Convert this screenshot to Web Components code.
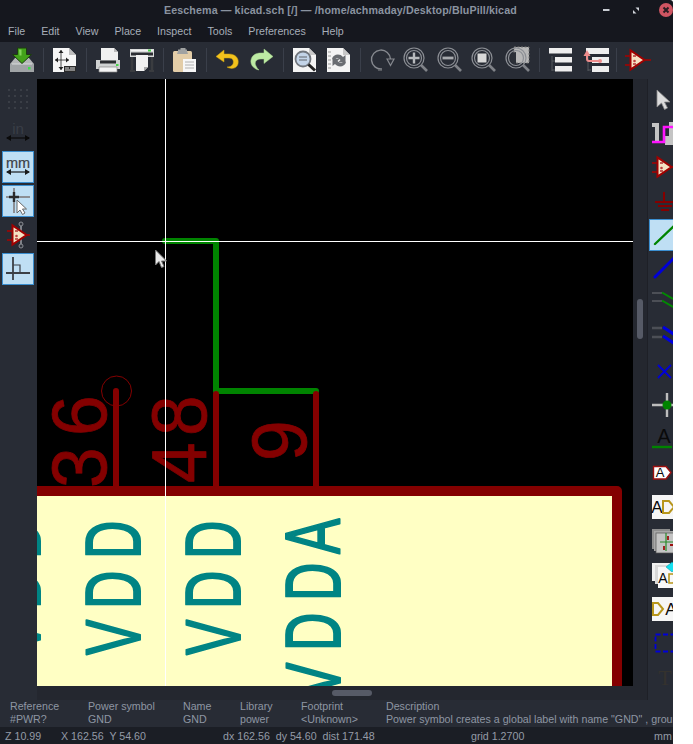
<!DOCTYPE html>
<html><head><meta charset="utf-8"><title>Eeschema</title>
<style>html,body{margin:0;padding:0;background:#fff}</style></head>
<body>
<kc-window>
  <kc-titlebar>Eeschema — kicad.sch [/] — /home/achmaday/Desktop/BluPill/kicad</kc-titlebar>
  <kc-menubar><kc-menu>File</kc-menu><kc-menu>Edit</kc-menu><kc-menu>View</kc-menu><kc-menu>Place</kc-menu><kc-menu>Inspect</kc-menu><kc-menu>Tools</kc-menu><kc-menu>Preferences</kc-menu><kc-menu>Help</kc-menu></kc-menubar>
  <kc-toolbar>
    <kc-tool icon="save"></kc-tool><kc-sep></kc-sep>
    <kc-tool icon="page"></kc-tool><kc-sep></kc-sep>
    <kc-tool icon="print"></kc-tool><kc-tool icon="plot"></kc-tool><kc-sep></kc-sep>
    <kc-tool icon="paste"></kc-tool><kc-sep></kc-sep>
    <kc-tool icon="undo"></kc-tool><kc-tool icon="redo"></kc-tool><kc-sep></kc-sep>
    <kc-tool icon="find"></kc-tool><kc-tool icon="replace"></kc-tool><kc-sep></kc-sep>
    <kc-tool icon="rotate"></kc-tool><kc-tool icon="zoomin"></kc-tool><kc-tool icon="zoomout"></kc-tool><kc-tool icon="zoomfit"></kc-tool><kc-tool icon="zoomsel"></kc-tool><kc-sep></kc-sep>
    <kc-tool icon="tree"></kc-tool><kc-tool icon="leave"></kc-tool><kc-sep></kc-sep>
    <kc-tool icon="symbol"></kc-tool>
  </kc-toolbar>
  <kc-workspace>
    <kc-sidebar side="left">
      <kc-tool box icon="grid"></kc-tool>
      <kc-tool box icon="inch"></kc-tool>
      <kc-tool box active icon="mm"></kc-tool>
      <kc-tool box active icon="snap"></kc-tool>
      <kc-tool box icon="symrod"></kc-tool>
      <kc-tool box active icon="axes"></kc-tool>
    </kc-sidebar>
    <kc-view></kc-view>
    <kc-sidebar side="right">
      <kc-tool box icon="arrow"></kc-tool>
      <kc-tool box icon="hier"></kc-tool>
      <kc-tool box icon="symbol"></kc-tool>
      <kc-tool box icon="gnd"></kc-tool>
      <kc-tool box active icon="wire"></kc-tool>
      <kc-tool box icon="bus"></kc-tool>
      <kc-tool box icon="wentry"></kc-tool>
      <kc-tool box icon="bentry"></kc-tool>
      <kc-tool box icon="nc"></kc-tool>
      <kc-tool box icon="junction"></kc-tool>
      <kc-tool box icon="label"></kc-tool>
      <kc-tool box icon="glabel"></kc-tool>
      <kc-tool box icon="hlabel"></kc-tool>
      <kc-tool box icon="sheet"></kc-tool>
      <kc-tool box icon="spin"></kc-tool>
      <kc-tool box icon="import"></kc-tool>
      <kc-tool box icon="rect"></kc-tool>
      <kc-tool box icon="text"></kc-tool>
    </kc-sidebar>
  </kc-workspace>
  <kc-msgpanel>
    <kc-msg w="78" label="Reference">#PWR?</kc-msg>
    <kc-msg w="95" label="Power symbol">GND</kc-msg>
    <kc-msg w="57" label="Name">GND</kc-msg>
    <kc-msg w="61" label="Library">power</kc-msg>
    <kc-msg w="85" label="Footprint">&lt;Unknown&gt;</kc-msg>
    <kc-msg w="300" label="Description">Power symbol creates a global label with name "GND" , ground</kc-msg>
  </kc-msgpanel>
  <kc-status>
    <kc-cell w="56">Z 10.99</kc-cell>
    <kc-cell w="162">X 162.56&nbsp; Y 54.60</kc-cell>
    <kc-cell w="248">dx 162.56&nbsp; dy 54.60&nbsp; dist 171.48</kc-cell>
    <kc-cell w="183">grid 1.2700</kc-cell>
    <kc-cell w="19">mm</kc-cell>
  </kc-status>
</kc-window>
<script>
const FONT = '"Liberation Sans", Arial, sans-serif';
function el(name, css, html, init){
  customElements.define(name, class extends HTMLElement{
    constructor(){super();this.attachShadow({mode:'open'}).innerHTML='<style>'+css+'</style>'+html;}
    connectedCallback(){ if(init) init.call(this,this.shadowRoot); }
  });
}
const sym = (rod)=>{
  const dx = rod?2:0;
  return `${rod?'<path d="M16 2V24" stroke="#7f8288" stroke-width="2"/><circle cx="16" cy="2" r="2" fill="#30343c" stroke="#8a8d93"/><circle cx="16" cy="24" r="2" fill="#30343c" stroke="#8a8d93"/>':''}
<g transform="translate(${dx} 0)"><path d="M0 9h5M0 18h5M19 13h${rod?4:7}" stroke="#a80000" stroke-width="1.600"/><path d="M5.500 3.500v19l14-9.500z" fill="#f6e2c4" stroke="#a00000" stroke-width="2"/><path d="M8 9h3M8 17h3" stroke="#b03030" stroke-width="1.400"/><circle cx="9.500" cy="14" r="1.300" fill="#c04040"/></g>`;};
const mag = (inner)=>`<circle cx="11" cy="11" r="10" fill="none" stroke="#8c8f95" stroke-width="1.200"/><circle cx="11" cy="11" r="7.500" fill="none" stroke="#8c8f95" stroke-width="1.200"/>${inner}<path d="M18 18l6 6" stroke="#7f8288" stroke-width="2.600"/>`;
const doc = `<path d="M1 1h16l7 7v17H1z" fill="#f4f4f4"/><path d="M17 1v7h7z" fill="#c8c8c8"/>`;
const dimArrow = (c)=>`<path d="M2 18h22" stroke="${c}" stroke-width="1.200"/><path d="M1 18l5-3v6zM25 18l-5-3v6z" fill="${c}"/>`;
const ICONS = {
save:`<path d="M1 17l5-6h14l5 6v8H1z" fill="#b4b7b8"/><path d="M1 17h24v8H1z" fill="#a0a4a6"/><path d="M3 17h20" stroke="#d8dadb"/><rect x="19" y="20" width="2.500" height="2.500" fill="#3ce04a"/><path d="M8.500 1h9v6.500h5l-9.500 9-9.500-9h5z" fill="#43a31a" stroke="#1c3c10" stroke-width="1"/><path d="M10 2.500h2.500v6h-2z" fill="#84d45c"/>`,
page:`<path d="M1 1h16l7 7v17H1z" fill="#f6f6f6"/><path d="M17 1v7h7z" fill="#bdbdbd"/><path d="M9 3v20M3 13h14" stroke="#222" stroke-width=".8"/><path d="M9 3l-2.500 3h5zM9 23l-2.500-3h5zM3 13l3-2.500v5zM17 13l-3-2.500v5z" fill="#222"/><rect x="12" y="19" width="12" height="6" fill="#2a2a2a"/><path d="M13 21h4M18 21h5M13 23h10" stroke="#ddd"/>`,
print:`<path d="M6 1h13l4 4v8H6z" fill="#f0f0f0"/><path d="M19 1v4h4z" fill="#bbb"/><path d="M1 13h24v9H1z" fill="#d0d2d2"/><path d="M5 13.500h16v3H5z" fill="#2a2c30"/><path d="M4 20h18v5H4z" fill="#f4f4f4" stroke="#888" stroke-width=".7"/><rect x="21" y="17" width="2.500" height="2" fill="#4ad24a"/>`,
plot:`<path d="M1 2h24v8H1z" fill="#d8dada"/><path d="M2 3.500h22" stroke="#f4f4f4" stroke-width="1.200"/><path d="M2 5.500h22v3H2z" fill="#2c2e33"/><rect x="19" y="2.500" width="3" height="2" fill="#4ad24a"/><path d="M3 10v13M23 10v13" stroke="#3a3c40" stroke-width="2.500"/><path d="M1 24h5M20 24h5" stroke="#3a3c40" stroke-width="2"/><path d="M7 8h12v12l-4 4H7z" fill="#f2f2f2"/><path d="M15 24v-4h4z" fill="#aaa"/>`,
paste:`<rect x="1" y="4" width="19" height="21" rx="1.500" fill="#e3cda8"/><path d="M6 4V2.500h2.500V1h5v1.500H15V4l1 3H5z" fill="#a0a2a2"/><path d="M11 12h13v13H11z" fill="#f7f7f7"/><path d="M13 15h9M13 18h9M13 21h9" stroke="#b0b0b0"/>`,
undo:`<path d="M9 3L1 9.500 9 15v-4h5c4 0 5 3 4 6-1 2-3 3-6 3 5 3 10 1 11-3 1.500-6-3-10-9-10H9z" fill="#f2c21c" stroke="#caa010" stroke-width=".5"/>`,
redo:`<path d="M15 2l9 7.500-9 7v-4.500h-3c-5 0-7 3-5 7 1 2 2 3 3 4-5-1-9-5-8-10 1-5 5-7 10-7h3z" fill="#bdeaa4" stroke="#a4d48c" stroke-width=".5"/>`,
find:`${doc}<circle cx="11" cy="12" r="7.500" fill="#c3d4e8" stroke="#70757c" stroke-width="1.800"/><path d="M7 10h8M7 13h8" stroke="#60646a"/><path d="M16.500 17.500l6.500 6" stroke="#222" stroke-width="3"/>`,
replace:`${doc}<path d="M2 5h3M2 9h3M2 13h3M2 17h3M2 21h3" stroke="#999"/><path d="M6 12c1-5 8-6 11-2l2.500-2v7h-7l2-2c-2-2-5-2-6 0z" fill="#6a6d72"/><path d="M20 15c-1 5-8 6-11 2l-2.500 2v-7h7l-2 2c2 2 5 2 6 0z" fill="#6a6d72"/>`,
rotate:`<path d="M21.500 12A9.500 9.500 0 1 0 13 22" fill="none" stroke="#85888e" stroke-width="1.400"/><path d="M18 12l3.500 6.500 3.500-6.500z" fill="#2a2e37" stroke="#85888e" stroke-width="1.200"/><path d="M9 23h4" stroke="#6a6d72" stroke-width="1.400"/>`,
zoomin:mag(`<path d="M11 5.500v11M5.500 11h11" stroke="#b8babd" stroke-width="2.400"/>`),
zoomout:mag(`<path d="M5.500 11h11" stroke="#a8aaae" stroke-width="2.800"/>`),
zoomfit:mag(`<rect x="6.500" y="6.500" width="9" height="9" fill="#d8d8d8"/>`),
zoomsel:`<rect x="9" y="0" width="15" height="16" fill="#b8b8b8" stroke="#777" stroke-dasharray="2 1.500"/>`+mag(`<path d="M11 5a6 6 0 0 0-6 6 6 6 0 0 0 6 6z" fill="#2c3038"/>`),
tree:`<path d="M4 9v15M4 14h3M4 23h3" stroke="#55585f" stroke-width="1"/><rect x="1" y="1" width="23" height="5.500" fill="#eeeeee"/><rect x="7" y="10" width="17" height="5.500" fill="#eeeeee"/><rect x="7" y="19" width="17" height="5.500" fill="#eeeeee"/>`,
leave:`<path d="M6 9v15M6 23h3" stroke="#55585f" stroke-width="1"/><rect x="4" y="1" width="23" height="6" fill="#eeeeee"/><rect x="10" y="10" width="17" height="6" fill="#eeeeee"/><rect x="10" y="19" width="17" height="6" fill="#eeeeee"/><path d="M5 9v3q0 2 2 2h11" fill="none" stroke="#ee8c8c" stroke-width="2"/><path d="M5 3l-3.500 6h7z" fill="#ee8c8c"/><circle cx="18" cy="14" r="2" fill="#ee8c8c"/>`,
symbol:sym(false),
grid:[4,10,16,22].map(y=>[4,10,16,22].map(x=>`<rect x="${x-1}" y="${y-1}" width="2" height="2" fill="#3a3e46"/>`).join('')).join(''),
inch:`<text x="13" y="14" text-anchor="middle" font-family="Liberation Sans" font-size="15" fill="#3a3e47">in</text>${dimArrow('#0a0a0a')}`,
mm:`<text x="13" y="14" text-anchor="middle" font-family="Liberation Sans" font-size="14.500" fill="#3c4046" stroke="#3c4046" stroke-width=".2">mm</text>${dimArrow('#1a1a1a')}`,
snap:`<path d="M1 9h24M9 0v25" stroke="#8c8f94" stroke-width="2"/><path d="M4 9h10M9 4v10" stroke="#2a2a2a" stroke-width="2.400"/><path d="M12 12v13l3-3 2.500 4.500 2.500-1.500-2.500-4h4z" fill="#fff" stroke="#666" stroke-width="1"/>`,
symrod:sym(true),
axes:`<path d="M8 1v23M1 17h24" stroke="#3c4046" stroke-width="1.800"/><path d="M8 9h7v8" fill="none" stroke="#3c4046" stroke-width="1.200"/>`,
arrow:`<path d="M5 4v17l4.500-4 3 6.500 3-1.500-3-6H18z" fill="#dcdcdc" stroke="#8a8a8a" stroke-width=".8"/>`,
hier:`<path d="M0 3h7v20H3V7H0zM17 2h9v23H13v-9h4z" fill="#c4c4c4"/><path d="M0 22h12V7h14" fill="none" stroke="#ff14ff" stroke-width="2.600"/>`,
gnd:`<path d="M12 4v10M3 14h20M6 18h14M9 22h8" stroke="#840000" stroke-width="2"/>`,
wire:`<path d="M3 22L24 2" stroke="#008400" stroke-width="2.400" stroke-linecap="round"/>`,
bus:`<path d="M3 21L24 0" stroke="#0000d8" stroke-width="3" stroke-linecap="round"/>`,
wentry:`<path d="M0 3h10M0 11h10" stroke="#4c4f56" stroke-width="2"/><path d="M10 2.500l13 7.500M10 10.500l13 7.500" stroke="#008c00" stroke-width="1.800"/>`,
bentry:`<path d="M0 4h10M0 13h10" stroke="#4c4f56" stroke-width="2.500"/><path d="M11 3l12 8M11 12l12 8" stroke="#0000e0" stroke-width="3"/>`,
nc:`<path d="M6 7l13 13M19 7L6 20" stroke="#0000d8" stroke-width="1.800"/>`,
junction:`<path d="M0 13h26M15 1v24" stroke="#bdbdbd" stroke-width="2.400"/><circle cx="15" cy="13" r="4.500" fill="#008400"/>`,
label:`<text x="12" y="17" text-anchor="middle" font-family="Liberation Sans" font-size="20" fill="#0a0a0a">A</text><path d="M0 21h20" stroke="#008400" stroke-width="2.400"/>`,
glabel:`<path d="M1.500 6.500H14l5 6-5 6.500H1.500z" fill="#fff" stroke="#9c1010" stroke-width="1.400"/><text x="8" y="17" text-anchor="middle" font-family="Liberation Sans" font-size="13" fill="#0a0a0a">A</text>`,
hlabel:`<rect x="0" y="1" width="26" height="24" fill="#f6f6f6"/><text x="5" y="19" text-anchor="middle" font-family="Liberation Sans" font-size="17" fill="#0a0a0a">A</text><path d="M11 7h6l5 6-5 6h-6z" fill="none" stroke="#b8961c" stroke-width="2"/>`,
sheet:`<rect x="0" y="1" width="18" height="20" fill="#8e8e8e"/><rect x="2" y="3" width="20" height="20" fill="#a8a8a8"/><rect x="4" y="5" width="22" height="20" fill="#c4c4c4" stroke="#555" stroke-width=".7"/><path d="M14 5v18M8 14h18" stroke="#2a8a2a" stroke-width="1.200"/><path d="M16 8v4M18 17h6M12 18v4" stroke="#9c1010" stroke-width="1.800"/>`,
spin:`<rect x="0" y="1" width="18" height="18" fill="#f0f0f0"/><rect x="3" y="3" width="18" height="19" fill="#d8d8d8"/><rect x="6" y="5" width="20" height="21" fill="#f8f8f8"/><path d="M20 0l6 5-6 5-6-5z" fill="#14e0f0" stroke="#0a8a96" stroke-width=".5"/><text x="11" y="21" text-anchor="middle" font-family="Liberation Sans" font-size="14" fill="#0a0a0a">A</text><path d="M17 12h4l4 4-4 5h-4z" fill="none" stroke="#b8961c" stroke-width="1.600"/>`,
import:`<rect x="0" y="1" width="26" height="24" fill="#f6f6f6"/><path d="M1 7h5l5 6-5 6H1z" fill="none" stroke="#b8961c" stroke-width="2"/><text x="19" y="19" text-anchor="middle" font-family="Liberation Sans" font-size="17" fill="#0a0a0a">A</text>`,
rect:`<rect x="3.500" y="4.500" width="24" height="17" fill="none" stroke="#0000d8" stroke-width="1.800" stroke-dasharray="5 2.500"/>`,
text:`<text x="13" y="21" text-anchor="middle" font-family="Liberation Serif" font-size="22" fill="#34322e">T</text>`
};
el('kc-window',`:host{display:flex;flex-direction:column;width:673px;height:744px;overflow:hidden;background:#15171e;color:#a6adb8;font:10.67px ${FONT};border-top-right-radius:3px}`,'<slot></slot>');
el('kc-titlebar',`:host{display:block;flex:none;height:22px;line-height:21px;padding-left:164px;font-weight:700;font-size:10.67px;letter-spacing:.12px;color:#8a93a0;white-space:nowrap}
.ctl{float:right;display:flex;align-items:center;height:20px;width:80px;margin-right:-7px}`,
`<span class="ctl"><svg width="80" height="20" viewBox="0 0 80 20"><path d="M3 10h6.500" stroke="#c8ccd2" stroke-width="2"/><path d="M35.500 7.500H39V11zM33 10v3.500h3.500z" fill="#d0d4da"/><circle cx="66" cy="10" r="7" fill="#cf5562"/><path d="M63.500 7.500l5 5M68.500 7.500l-5 5" stroke="#2a1d22" stroke-width="2"/></svg></span><slot></slot>`);
el('kc-menubar',`:host{display:flex;flex:none;height:20px;align-items:center;box-sizing:border-box;padding-bottom:3px}`,'<slot></slot>');
el('kc-menu',`:host{display:block;padding:0 8px;font-size:10.67px;color:#a6adb8}`,'<slot></slot>');
el('kc-toolbar',`:host{display:flex;flex:none;height:37px;box-sizing:border-box;padding:1px 0 1px 5px;background:#282c35;align-items:flex-start}`,'<slot></slot>');
el('kc-sep',`:host{display:flex;flex:none;width:9px;height:34px;justify-content:center;align-items:center}i{display:block;width:1px;height:24px;background:#3a3f4a}`,'<i></i>');
el('kc-tool',`:host{display:flex;flex:none;width:34px;height:34px;align-items:center;justify-content:center;box-sizing:border-box}
:host([box]){width:32px;height:32px;margin-bottom:2px;border:1px solid transparent}
:host([active]){background:#bfdff4;border-color:#3b8fd0}
svg{display:block;flex:none;overflow:visible}`,'<svg width="26" height="26" viewBox="0 0 26 26"></svg>',
function(r){r.querySelector('svg').innerHTML=ICONS[this.getAttribute('icon')]||''});
el('kc-workspace',`:host{display:flex;flex:none;height:621px;background:#24272f}`,'<slot></slot>');
el('kc-sidebar',`:host{display:flex;flex-direction:column;flex:none;box-sizing:border-box;padding-top:4px;background:#282c35;overflow:hidden}
:host([side=left]){width:37px;padding-left:2px}
:host([side=right]){width:26px;padding-left:1px;border-left:1px solid #1e2027}`,'<slot></slot>');
function rot(x,y,txt,xs,fill,cls,sc){
  return `<text transform="translate(${x} ${y}) rotate(-90) scale(${sc} 1)" x="${xs.map(v=>(v/sc).toFixed(1)).join(' ')}" fill="${fill}" stroke="${fill}" class="${cls}">${txt}</text>`;
}
el('kc-view',`:host{display:grid;flex:none;width:610px;height:620px;grid-template-columns:596px 14px;grid-template-rows:607px 13px}
svg{display:block;grid-column:1;grid-row:1;background:#000}
text{font-family:"Liberation Sans",sans-serif;font-size:78px;stroke-width:2;stroke-linejoin:round}
.pin{font-size:77px;stroke-width:.8}
.h{grid-column:1;grid-row:2;background:#24272f;padding:4px 0 0 295px;box-sizing:border-box}
.h i{display:block;width:40px;height:6px;border-radius:3px;background:#565a66}
.v{grid-column:2;grid-row:1/3;background:#24272f;padding:220px 0 0 4px;box-sizing:border-box}
.v i{display:block;width:6px;height:40px;border-radius:3px;background:#565a66}`,
`<svg width="596" height="607" viewBox="37 79 596 607">
<path d="M165 241H216V391H316" fill="none" stroke="#008400" stroke-width="6" stroke-linecap="round" stroke-linejoin="round"/>
<path d="M116 391V488M216 394V488M316 394V488" stroke="#840000" stroke-width="6" stroke-linecap="round"/>
<circle cx="116.500" cy="391" r="15" fill="none" stroke="#840000" stroke-width="1"/>
<rect x="30" y="491" width="587" height="195" fill="#ffffc4"/>
<path d="M30 491H617V686" fill="none" stroke="#840000" stroke-width="10" stroke-linejoin="round"/>
${rot(106,485,'36',[-3,49],'#840000','pin',.95)}
${rot(206,483,'48',[0,47],'#840000','pin',.95)}
${rot(306,461,'9',[0],'#840000','pin',.95)}
${rot(140,655,'VDD',[0,46,96],'#008484','name',.68)}
${rot(240,655,'VDD',[0,46,96],'#008484','name',.68)}
${rot(340,698,'VDDA',[0,47,97,144],'#008484','name',.68)}
${rot(40,655,'VDD',[0,46,96],'#008484','name',.68)}
<rect x="37" y="686" width="596" height="1" fill="#000"/>
<path d="M37 241.500H633M165.500 79V686" stroke="#fff" stroke-width="1"/>
<path d="M155.500 250v15l3.500-3.500 2.500 6 2.500-1-2.500-5.500h5z" fill="#e8e8e8" stroke="#777" stroke-width="1"/>
</svg><div class="h"><i></i></div><div class="v"><i></i></div>`);
el('kc-msgpanel',`:host{display:flex;flex:none;height:27px;box-sizing:border-box;padding:0 0 0 10px;background:#282c35;overflow:hidden}`,'<slot></slot>');
el('kc-msg',`:host{display:block;flex:none;white-space:nowrap;font-size:10.67px;line-height:13px;padding-top:0;color:#8e96a3}div{height:13px}`,
`<div id="l"></div><div><slot></slot></div>`,
function(r){r.getElementById('l').textContent=this.getAttribute('label');this.style.width=this.getAttribute('w')+'px'});
el('kc-status',`:host{display:flex;flex:none;height:18px;box-sizing:border-box;padding-left:5px;align-items:center;background:#1b1e25;overflow:hidden}`,'<slot></slot>');
el('kc-cell',`:host{display:block;flex:none;white-space:nowrap;font-size:10.67px;color:#949ba7}`,'<slot></slot>',
function(){this.style.width=this.getAttribute('w')+'px'});
</script>
</body></html>
